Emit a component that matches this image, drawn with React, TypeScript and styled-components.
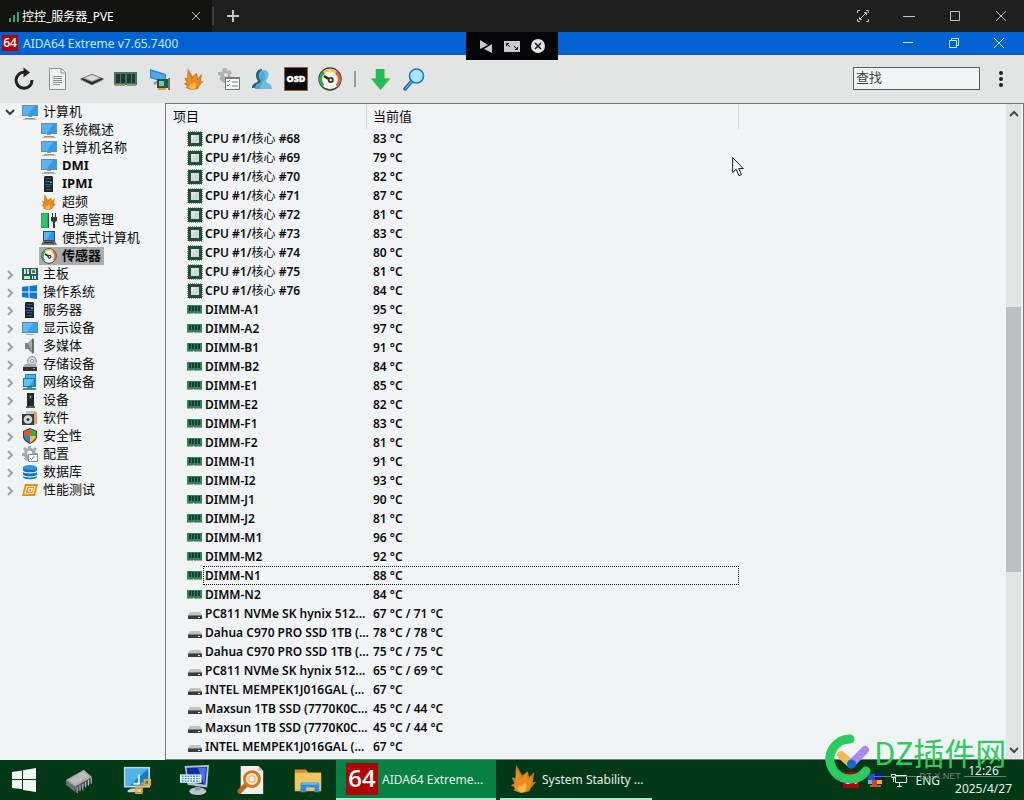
import React, { useState } from "react";
import styled, { createGlobalStyle } from "styled-components";

const UI = `"Noto Sans", "Noto Sans CJK SC", sans-serif`;

const Global = createGlobalStyle`
  * { box-sizing: border-box; }
  body { margin: 0; background: #f1f4f4; font-family: ${UI}; font-size: 13px; color: #0c0c0c; }
  button { border: 0; padding: 0; background: none; color: inherit; font: inherit; }
  svg { display: block; flex: none; }
`;

const Screen = styled.div`
  position: relative;
  display: flex;
  flex-direction: column;
  height: 100vh;
  overflow: hidden;
`;

/* Remote session tabs */
const TabBar = styled.header`
  display: flex;
  flex: none;
  height: 32px;
  background: #1f1f1f;
  color: #c4c4c4;
`;
const SessionTab = styled.div`
  display: flex;
  align-items: center;
  gap: 3px;
  width: 212px;
  padding: 0 8px;
  background: #121310;
  color: #fff;
  font-size: 12px;
`;
const TabTitle = styled.span`
  flex: 1;
  white-space: nowrap;
`;
const TabDivider = styled.span`
  width: 2px;
  height: 18px;
  margin-top: 7px;
  background: #3b3b3b;
`;
const IconButton = styled.button<{ $w?: number }>`
  display: flex;
  align-items: center;
  justify-content: center;
  width: ${(p) => p.$w ?? 16}px;
  height: 100%;
`;
const Controls = styled.div<{ $pad?: number }>`
  display: flex;
  margin-left: auto;
  padding-right: ${(p) => p.$pad ?? 0}px;
`;

/* Application window */
const TitleBar = styled.header`
  display: flex;
  flex: none;
  align-items: center;
  height: 23px;
  padding-left: 2px;
  gap: 5px;
  background: #0262d2;
  border-bottom: 1px solid #075fb4;
  color: #c4ecff;
`;
const AppTitle = styled.h1`
  margin: 0;
  font-size: 12px;
  font-weight: 400;
`;
const RemotePanel = styled.div`
  position: absolute;
  top: 32px;
  left: 50%;
  display: flex;
  align-items: center;
  justify-content: center;
  width: 92px;
  height: 28px;
  transform: translateX(-50%);
  background: #040406;
`;
const ToolBar = styled.div`
  display: flex;
  flex: none;
  align-items: center;
  height: 48px;
  padding: 0 7px;
  background: #e2e5e4;
`;
const Divider = styled.span`
  width: 2px;
  height: 16px;
  margin: 0 7px;
  background: #979a99;
`;
const SearchInput = styled.input`
  width: 127px;
  height: 23px;
  margin: 0 4px 2px auto;
  padding: 0 2px 3px;
  border: 1px solid #5c5e5e;
  background: #f1f4f4;
  font-family: ${UI};
  font-size: 13px;
  &::placeholder { color: #3f4242; opacity: 1; }
`;

const Body = styled.main`
  display: flex;
  flex: 1;
  min-height: 0;
`;
const Tree = styled.nav`
  flex: none;
  width: 165px;
  overflow: hidden;
`;
const TreeList = styled.ul`
  margin: 0;
  padding: 0;
  list-style: none;
`;
const TreeRow = styled.button<{ $child?: boolean; $bold?: boolean }>`
  display: flex;
  align-items: center;
  width: 100%;
  height: 18px;
  padding-left: ${(p) => (p.$child ? 39 : 3)}px;
  font-weight: ${(p) => (p.$bold ? 700 : 400)};
  text-align: left;
  white-space: nowrap;
`;
const Expander = styled.span`
  width: 17px;
`;
const TreeLabel = styled.span<{ $selected?: boolean }>`
  display: flex;
  align-items: center;
  gap: 5px;
  height: 18px;
  padding: 0 3px 0 2px;
  background: ${(p) => (p.$selected ? "#a9adac" : "transparent")};
`;
const TreeText = styled.span`
  height: 18px;
  line-height: 16px;
`;

const ListPane = styled.section`
  display: flex;
  flex: 1;
  min-width: 0;
  border: 1px solid #757877;
`;
const ListArea = styled.div`
  flex: 1;
  min-width: 0;
  overflow: hidden;
`;
const Table = styled.table`
  width: 573px;
  border-collapse: separate;
  border-spacing: 0;
  table-layout: fixed;
`;
const Head = styled.th<{ $w: number; $pad: number }>`
  width: ${(p) => p.$w}px;
  height: 25px;
  padding: 0 0 2px ${(p) => p.$pad}px;
  border-right: 1px solid #d5d8d8;
  font-weight: 400;
  text-align: left;
`;
const Row = styled.tr`
  height: 19px;
  font-size: 12px;
  font-weight: 600;
`;
const NameCell = styled.td`
  padding: 0 0 0 21px;
`;
const NameLine = styled.div`
  display: flex;
  align-items: center;
  height: 19px;
`;
const NameText = styled.span<{ $focus?: boolean }>`
  flex: 1;
  height: 19px;
  min-width: 0;
  padding-left: 1px;
  border: 1px dotted ${(p) => (p.$focus ? "#111" : "transparent")};
  border-right: 0;
  line-height: 17px;
  white-space: nowrap;
`;
const Han = styled.span`
  font-weight: 400;
  line-height: 1;
`;
const ValueCell = styled.td`
  padding: 0;
`;
const ValueText = styled.div<{ $focus?: boolean }>`
  height: 19px;
  padding-left: 6px;
  border: 1px dotted ${(p) => (p.$focus ? "#111" : "transparent")};
  border-left: 0;
  line-height: 17px;
  white-space: nowrap;
`;
const ScrollBar = styled.div`
  display: flex;
  flex-direction: column;
  width: 15px;
  margin-right: 2px;
  background: #e3e5e5;
`;
const ScrollButton = styled.button`
  display: flex;
  flex: none;
  align-items: center;
  justify-content: center;
  height: 19px;
`;
const ScrollTrack = styled.div`
  display: flex;
  flex: 1;
  flex-direction: column;
`;
const ScrollSpace = styled.span<{ $grow: number }>`
  flex: ${(p) => p.$grow};
`;
const ScrollThumb = styled.span`
  flex: 265;
  background: #bcc0c0;
`;

/* Taskbar */
const TaskBar = styled.footer`
  display: flex;
  flex: none;
  height: 40px;
  background: #033817;
  color: #e3f2e9;
`;
const Launchers = styled.div`
  display: flex;
  padding: 0 0 0 3px;
`;
const TaskButton = styled.button<{ $active?: boolean; $w: number }>`
  display: flex;
  align-items: center;
  gap: 4px;
  width: ${(p) => p.$w}px;
  margin: 0 4px 0 0;
  padding: 0 10px;
  background: ${(p) => (p.$active ? "#078043" : "transparent")};
  border-bottom: 2px solid #9ff0cb;
  font-size: 12px;
  white-space: nowrap;
`;
const Tray = styled.div`
  display: flex;
  align-items: center;
  gap: 8px;
  margin-left: auto;
  padding-right: 12px;
  font-size: 12px;
`;
const Clock = styled.time`
  display: flex;
  flex-direction: column;
  align-items: center;
  margin-left: 7px;
  line-height: 18px;
`;

/* Site mark that floats over the corner */
const Mark = styled.div`
  position: absolute;
  right: 18px;
  bottom: 16px;
  display: flex;
  align-items: flex-start;
  pointer-events: none;
`;
const MarkText = styled.div`
  display: flex;
  flex-direction: column;
  width: 132px;
`;
const MarkName = styled.span`
  color: #2ecb60;
  font-family: "Noto Sans CJK SC", sans-serif;
  font-size: 31px;
  font-weight: 400;
  line-height: 36px;
  white-space: nowrap;
`;
const MarkSite = styled.span`
  display: flex;
  align-items: center;
  gap: 3px;
  color: #76847c;
  font-family: "Liberation Sans", sans-serif;
  font-size: 9px;
  line-height: 12px;
  &::before, &::after { content: ""; flex: 1; height: 1px; background: #65846f; }
`;
const Pointer = styled.div`
  position: absolute;
  top: 156px;
  left: 732px;
  pointer-events: none;
`;

/* Icons */
const art: Record<string, React.ReactNode> = {
  monitor: (
    <>
      <rect x="0" y="1" width="16" height="11" fill="#6e8a9c" />
      <rect x="1" y="2" width="14" height="9" fill="#2f9cf0" />
      <path d="M1 11V2h11L6 11z" fill="#55b4f7" />
      <path d="M6 12h4v1H6zM3 14h10v1H3z" fill="#8b9499" />
      <path d="M1 15h14v1H1z" fill="#b3b9bc" />
    </>
  ),
  display: (
    <>
      <rect x="0" y="2" width="16" height="11" fill="#5f8298" />
      <rect x="1" y="3" width="14" height="9" fill="#37a5f2" />
      <path d="M1 3h10L5 12H1z" fill="#5ebcf8" />
      <path d="M4 14h8v1H4z" fill="#a2a9ac" />
    </>
  ),
  server: (
    <>
      <path d="M3 1l1-1h7l1 1v15H3z" fill="#20252b" />
      <path d="M5 2h5v1H5zM5 10h5v1H5zM5 13h5v1H5z" fill="#4b535b" />
      <path d="M4 5h7v1H4zM4 8h7v1H4z" fill="#1763d0" />
      <path d="M9 6h2v1H9z" fill="#35d96d" />
    </>
  ),
  flame: (
    <>
      <path d="M3.500 0L7 6l3-2.500L11 7l2.800-3-.8 6L15 9.500 12 13l-1 2-4.500 1L2 14.500 3 13 .5 11.500 2.500 10.500 1 7l2 .5z" fill="#c9821f" />
      <path d="M4 2.500L6.500 8 9.500 5l.7 4L13 6.500l-1.500 6-2.500 3H5L2.500 13l.5-3z" fill="#ef8a20" />
      <path d="M5 11.500l2 .5L8.500 10l1 2-.5 2.500-2.500 1.300L4.500 14z" fill="#ffb948" />
    </>
  ),
  power: (
    <>
      <rect x="0" y="1" width="7" height="15" fill="#20a957" />
      <path d="M1 2h5v13H1z" fill="#35c16e" />
      <path d="M7 1h1v15H7z" fill="#3d5146" />
      <path d="M11 1h1v4h2V1h1v4h1v4l-2 1v6h-2v-6l-2-1V5h1z" fill="#333735" />
    </>
  ),
  laptop: (
    <>
      <path d="M2 1h12v10H2z" fill="#3b454c" />
      <path d="M3 2h10v8H3z" fill="#2997ec" />
      <path d="M3 2h7l-4 8H3z" fill="#56b6f7" />
      <path d="M2 11h12l2 4H0z" fill="#677178" />
      <path d="M3 12h10v1H3z" fill="#222a30" />
    </>
  ),
  gauge: (
    <>
      <circle cx="8" cy="8" r="7.300" fill="#f4f4e9" stroke="#3c3f3d" strokeWidth="1" />
      <path d="M3.500 12.500A6 6 0 0 1 4 3.500" fill="none" stroke="#35a558" strokeWidth="2" />
      <path d="M4 3.500a6 6 0 0 1 8 0" fill="none" stroke="#f0c556" strokeWidth="2" />
      <path d="M12 3.500a6 6 0 0 1 .5 9" fill="none" stroke="#e0662f" strokeWidth="2" />
      <path d="M4 6l4 2.500" stroke="#222" strokeWidth="1.600" />
      <circle cx="8.500" cy="8.700" r="2" fill="#333" />
      <circle cx="8.500" cy="8.700" r=".8" fill="#eee" />
    </>
  ),
  board: (
    <>
      <rect x="0" y="2" width="16" height="12" fill="#20624b" />
      <path d="M2 3h2v5H2zM5 3h2v5H5zM9 3h5v5H9zM2 10h6v3H2zM10 10h1v3h-1zM12 10h2v3h-2z" fill="#cfe2d9" />
      <path d="M10 4h3v3h-3z" fill="#43826c" />
    </>
  ),
  windows: (
    <path d="M0 3l6.500-1v5.500H0zM7.500 1.900L15 1v6.500H7.500zM0 8.500h6.500V14L0 13zM7.500 8.500H15V15l-7.500-1z" fill="#087bd3" />
  ),
  speaker: (
    <>
      <path d="M3 5h3l5-5v16l-5-5H3z" fill="#7c8180" />
      <path d="M6 5l5-5v16z" fill="#a7abaa" />
      <path d="M10 1h2v14h-2z" fill="#676b6a" />
    </>
  ),
  storage: (
    <>
      <circle cx="10" cy="5" r="4.500" fill="#d5d8d8" stroke="#8c9090" />
      <circle cx="10" cy="5" r="1.600" fill="#f6f6f6" stroke="#8c9090" />
      <path d="M3 8h10l2 3H1z" fill="#a6aaaa" />
      <path d="M1 11h14v4H1z" fill="#303434" />
      <path d="M11 12h2v1h-2z" fill="#42dd72" />
    </>
  ),
  network: (
    <>
      <path d="M3 0h11v13H3z" fill="#247eb8" />
      <path d="M4 1h9v6H4z" fill="#48b2f4" />
      <path d="M1 4h12v9H1z" fill="#1e74ae" />
      <path d="M2 5h10v7H2z" fill="#62c1f8" />
      <path d="M12 5L7 12h5z" fill="#349ee8" />
      <path d="M5 13h5v1H5zM1 14h13v2H1z" fill="#3a9c68" />
    </>
  ),
  tower: (
    <>
      <path d="M5 1h7v14H5z" fill="#20272a" />
      <path d="M7 3h3v4H7z" fill="#3d474a" />
      <path d="M8 4h1v2H8z" fill="#40d47a" />
      <path d="M4 14h9v2H4z" fill="#555b5c" />
    </>
  ),
  software: (
    <>
      <path d="M4 1h9v14H4z" fill="#bfc5c6" />
      <path d="M12 1l3 1v12h-3z" fill="#e3a05c" />
      <path d="M0 4h12v11H0z" fill="#363c3e" />
      <circle cx="6" cy="9.500" r="4.300" fill="#d9dddd" />
      <circle cx="6" cy="9.500" r="1.500" fill="#333" />
    </>
  ),
  shield: (
    <>
      <path d="M8 0l7 3v5c0 4-3 6-7 8-4-2-7-4-7-8V3z" fill="#40392f" />
      <path d="M8 1v7H2V3.500z" fill="#e5562d" />
      <path d="M8 1l6 2.500V8H8z" fill="#45a645" />
      <path d="M2 8h6v7C5 13 2 11 2 8z" fill="#2c84ce" />
      <path d="M8 8h6c0 3-3 5-6 7z" fill="#f2bd32" />
    </>
  ),
  config: (
    <>
      <path d="M6 0h3v2l2 1 2-2 2 2-2 2 1 2h2v3H0V7h2l1-2-2-2 2-2 2 2 1-1zM1 10h5v4l-2 1-2-2 1-2z" fill="#a5abac" />
      <circle cx="7.500" cy="7" r="2.500" fill="#eef1f1" />
      <path d="M6.500 8.500h9v7h-9z" fill="#f8fafa" stroke="#818789" />
      <path d="M8 12l1.500 1.500L12 10.500" fill="none" stroke="#3e7b9d" />
    </>
  ),
  database: (
    <>
      <path d="M1 3v10c0 3 14 3 14 0V3z" fill="#1273c4" />
      <ellipse cx="8" cy="3.500" rx="7" ry="2.500" fill="#3297e4" />
      <path d="M1 7c1 2.500 13 2.500 14 0M1 11c1 2.500 13 2.500 14 0" fill="none" stroke="#e8f4fb" strokeWidth="1.200" />
    </>
  ),
  bench: (
    <>
      <path d="M3 2h13l-3 12H0z" fill="#ec8a18" />
      <path d="M5 4.500h8l-2 7H3zM7.200 6.500h3l-.7 3h-3z" fill="none" stroke="#fff0cf" strokeWidth="1.200" />
    </>
  ),
  cpu: (
    <>
      <rect x="1" y="1" width="14" height="14" fill="none" stroke="#8a9a91" strokeWidth="2" strokeDasharray="1 1" />
      <rect x="1" y="1" width="14" height="14" fill="#204f3b" />
      <rect x="4" y="4" width="8" height="8" fill="#cfd8d2" />
      <path d="M4 4h6l-6 6z" fill="#dee5e0" />
    </>
  ),
  ram: (
    <>
      <path d="M0 3h15v8H0z" fill="#2b8460" />
      <path d="M0 11h6v1H0zM7 11h8v1H7z" fill="#a0a583" />
      <path d="M2 4h2v5H2zM5 4h2v5H5zM8 4h2v5H8zM11 4h2v5h-2z" fill="#1e3930" />
    </>
  ),
  drive: (
    <>
      <path d="M3 6h10l2 3H1z" fill="#c1c4c4" />
      <path d="M1 9h14v4H1z" fill="#3a3d3d" />
      <path d="M1 9h14v1H1z" fill="#777b7b" />
      <path d="M11 11h2v1h-2z" fill="#d7f2dd" />
    </>
  ),
  aida: (
    <>
      <rect width="16" height="16" fill="#b00508" />
      <text x="8" y="12" textAnchor="middle" fontFamily="Open Sans, sans-serif" fontSize="12" fontWeight="600" fill="#fff">64</text>
    </>
  ),
  blocks: (
    <>
      <path d="M1 2h7v6H1z" fill="#1d55c8" />
      <path d="M8 1h7v7H8z" fill="#10149c" />
      <path d="M1 8h5v4H1z" fill="#58b8e8" />
      <path d="M5 8h5v5H5z" fill="#e63a28" />
      <path d="M10 8h5v4h-5z" fill="#f0b52c" />
      <path d="M3 13h11v2H3z" fill="#d05a20" />
    </>
  ),
  lan: (
    <>
      <path d="M4.500 3.500h11v7h-11zM8.500 11v3M6 14.500h5" fill="none" stroke="#e3f2e9" />
      <path d="M.5 2.500h4v3h-4zM2.500 6v4" fill="#033817" stroke="#e3f2e9" />
    </>
  ),
  refresh: (
    <>
      <path d="M13 5.300A8 8 0 1 0 20 13" fill="none" stroke="#222" strokeWidth="3" />
      <path d="M11.500 0.500l6.500 5-6.500 5z" fill="#222" />
    </>
  ),
  page: (
    <>
      <path d="M3.500 1.500h12l4 4v17h-16z" fill="#f0f2f2" stroke="#8b8f8f" />
      <path d="M15 2v4h4" fill="none" stroke="#8b8f8f" />
      <path d="M7 9.500h9M7 11.500h9M7 13.500h9M7 15.500h9M7 17.500h7" stroke="#8d9191" />
    </>
  ),
  chip: (
    <>
      <path d="M0 12l12-5 12 5-12 6z" fill="#25322e" />
      <path d="M2 11l10-4 10 4-10 4z" fill="#88958f" />
      <path d="M5 11l7-3 7 3-7 3z" fill="#dbe0dd" />
      <path d="M1 13l11 5 11-5" fill="none" stroke="#728078" strokeWidth="1" strokeDasharray="1 1" />
    </>
  ),
  memory: (
    <>
      <path d="M0 5h23v13H0z" fill="#3a7962" />
      <path d="M2 7h4v9H2zM7 7h4v9H7zM13 7h4v9h-4zM18 7h3v9h-3z" fill="#27342f" />
      <path d="M1 17h10v2H1zM13 17h9v2h-9z" fill="#8b9a73" />
    </>
  ),
  gpu: (
    <>
      <path d="M2 2l16 5v9L2 11z" fill="#3384b8" />
      <path d="M3 4l14 4v7L3 10z" fill="#49aaf2" />
      <path d="M5 16l5-3v3l-3 2z" fill="#8d9b9e" />
      <path d="M9 12h11v9H9z" fill="#195d43" />
      <path d="M11 14h5v5h-5z" fill="#8ac0a4" />
      <path d="M10 21h8v2h-8z" fill="#e89b2e" />
      <path d="M20 11h2v12h-2z" fill="#6e7678" />
    </>
  ),
  prefs: (
    <>
      <path d="M7 1h4v3l3-1 2 3-2 2 2 2-3 3-3-1v4H8l-5-4 2-3-3-1V5h4z" fill="#adb2b2" />
      <circle cx="10" cy="8" r="2" fill="#e2e5e4" />
      <path d="M9.500 10.500h14v12h-14z" fill="#f7f9f9" stroke="#6f7777" />
      <path d="M9 10h15v2H9z" fill="#778184" />
      <path d="M11 14l1 1 2-2M11 18l1 1 2-2" fill="none" stroke="#328ac0" />
      <path d="M16 15h6M16 19h6" stroke="#71797b" />
    </>
  ),
  user: (
    <>
      <path d="M2 21c0-5 5-5 6-7C4 9 6 2 12 2v19z" fill="#286774" />
      <path d="M5 22c0-6 5-5 6-8-4-5-2-11 3-11s6 6 2 11c1 3 6 2 6 8z" fill="#6fb9e4" />
      <path d="M12 4c4 2 4 8 1 10l-3 8H5c0-6 5-5 6-8-3-4-1-8 1-10z" fill="#3b95d2" opacity=".5" />
    </>
  ),
  osd: (
    <>
      <rect x="0" y="0" width="24" height="24" fill="#8f6046" />
      <rect x="1" y="1" width="22" height="22" fill="#0d0c0c" />
      <text x="12" y="15" textAnchor="middle" fontFamily="Open Sans, sans-serif" fontSize="9" fontWeight="800" fill="#fff" stroke="#fff" strokeWidth=".4">OSD</text>
    </>
  ),
  down: (
    <>
      <path d="M8 1h9v10h6L12.500 23 2 11h6z" fill="#d2d957" />
      <path d="M7 1h9v10h6L12 23 2 11h5z" fill="#24bd58" />
    </>
  ),
  find: (
    <>
      <path d="M10 14l-7 8" stroke="#1a5e9d" strokeWidth="3.500" strokeLinecap="round" />
      <path d="M10 14l-7 8" stroke="#57b9ed" strokeWidth="1.200" strokeLinecap="round" />
      <circle cx="14.500" cy="9" r="7" fill="#a8e6ff" stroke="#1d75bd" strokeWidth="1.600" />
    </>
  ),
};

interface IconProps {
  name: string;
  size?: number;
  box?: number;
}
const Icon = ({ name, size = 16, box = 16 }: IconProps) => (
  <svg width={size} height={size} viewBox={`0 0 ${box} ${box}`} aria-hidden="true">{art[name]}</svg>
);

interface LineProps {
  d: string;
  size?: number;
  color?: string;
  width?: number;
}
const Line = ({ d, size = 12, color = "currentColor", width = 1 }: LineProps) => (
  <svg width={size} height={size} viewBox={`0 0 ${size} ${size}`} fill="none" stroke={color} strokeWidth={width} aria-hidden="true">
    <path d={d} />
  </svg>
);

const tools: [string, string, number][] = [
  ["刷新", "refresh", 24], ["报告", "page", 24], ["处理器", "chip", 24], ["内存", "memory", 24],
  ["显卡", "gpu", 24], ["稳定性测试", "flame", 16], ["设置", "prefs", 24], ["用户", "user", 24],
  ["OSD", "osd", 24], ["传感器", "gauge", 16],
];

const children: [string, string, boolean?][] = [
  ["系统概述", "monitor"], ["计算机名称", "monitor"], ["DMI", "monitor", true], ["IPMI", "server", true],
  ["超频", "flame"], ["电源管理", "power"], ["便携式计算机", "laptop"], ["传感器", "gauge"],
];

const groups: [string, string][] = [
  ["主板", "board"], ["操作系统", "windows"], ["服务器", "server"], ["显示设备", "display"],
  ["多媒体", "speaker"], ["存储设备", "storage"], ["网络设备", "network"], ["设备", "tower"],
  ["软件", "software"], ["安全性", "shield"], ["配置", "config"], ["数据库", "database"], ["性能测试", "bench"],
];

type Reading = [icon: string, name: React.ReactNode, value: string, focus?: boolean];
const cores = [83, 79, 82, 87, 81, 83, 80, 81, 84];
const dimms: [string, number][] = [
  ["A1", 95], ["A2", 97], ["B1", 91], ["B2", 84], ["E1", 85], ["E2", 82], ["F1", 83], ["F2", 81],
  ["I1", 91], ["I2", 93], ["J1", 90], ["J2", 81], ["M1", 96], ["M2", 92], ["N1", 88], ["N2", 84],
];
const rows: Reading[] = [
  ...cores.map((t, i): Reading => ["cpu", <>CPU #1/<Han>核心</Han> #{68 + i}</>, `${t} °C`]),
  ...dimms.map(([n, t]): Reading => ["ram", `DIMM-${n}`, `${t} °C`, n === "N1"]),
  ["drive", "PC811 NVMe SK hynix 512...", "67 °C / 71 °C"],
  ["drive", "Dahua C970 PRO SSD 1TB (...", "78 °C / 78 °C"],
  ["drive", "Dahua C970 PRO SSD 1TB (...", "75 °C / 75 °C"],
  ["drive", "PC811 NVMe SK hynix 512...", "65 °C / 69 °C"],
  ["drive", "INTEL MEMPEK1J016GAL (...", "67 °C"],
  ["drive", "Maxsun 1TB SSD (7770K0C...", "45 °C / 44 °C"],
  ["drive", "Maxsun 1TB SSD (7770K0C...", "45 °C / 44 °C"],
  ["drive", "INTEL MEMPEK1J016GAL (...", "67 °C"],
];

const launchers: [string, React.ReactNode][] = [
  ["CPU", (
    <>
      <path d="M1 16L20 5l9 8-18 13z" fill="#a9aaa8" />
      <path d="M1 16l10 7v6L1 21z" fill="#6d6f6d" />
      <path d="M11 23l18-10v5L11 29z" fill="#4a4c4a" />
      <path d="M13 23v7M16 21v7M19 20v7M22 18v6M25 16v6M28 14v6" stroke="#c9cbc9" />
      <path d="M4 16L20 7l5 5-14 9z" fill="#bcbdbb" />
    </>
  )],
  ["远程桌面", (
    <>
      <path d="M2 2h28v22H2z" fill="#b9d6df" />
      <path d="M4 4h24v18H4z" fill="#147bc8" />
      <path d="M4 4h24L8 22H4z" fill="#50b3e8" />
      <path d="M18 10v10h-6" fill="none" stroke="#e4f5fb" strokeWidth="2" />
      <path d="M10 25h12v4H6v-2z" fill="#c0d5dc" />
      <path d="M15 24h6v6h-6zM24 16h6v5h-6zM20 20h4" fill="none" stroke="#f0a324" strokeWidth="2" />
    </>
  )],
  ["屏幕键盘", (
    <>
      <path d="M6 1l26-1-2 24-21-3z" fill="#b5c2d3" />
      <path d="M8 3l22-1-2 19-18-3z" fill="#122a9d" />
      <path d="M20 3h9l-2 18z" fill="#4776db" />
      <ellipse cx="20" cy="28" rx="9" ry="4" fill="#bcc3cb" />
      <path d="M17 23h6v4h-6z" fill="#8d98a5" />
      <path d="M1 10h23v9H1z" fill="#e9f5fb" />
      <path d="M3 12h19M3 14.500h19M3 17h19" stroke="#3c98bd" strokeWidth="1.500" strokeDasharray="2 1" />
    </>
  )],
  ["搜索", (
    <>
      <path d="M5 1h19l5 5v25H5z" fill="#eceeed" />
      <path d="M24 1v5h5z" fill="#b9bdbb" />
      <path d="M11 21l-7 7" stroke="#c56616" strokeWidth="5" strokeLinecap="round" />
      <circle cx="17" cy="15" r="8" fill="#f8e4cb" stroke="#d97719" strokeWidth="3" />
      <circle cx="17" cy="15" r="3.500" fill="#fbf1e4" stroke="#e79c51" />
    </>
  )],
  ["文件资源管理器", (
    <>
      <path d="M2 5h12l2 3h14v20H2z" fill="#ecb64b" />
      <path d="M2 5h12l1 3H2z" fill="#e18a24" />
      <path d="M2 9h28v17H2z" fill="#f3c760" />
      <path d="M8 29V20l2-2h16l2 2v9h-5v-5h-9v5z" fill="#2f8edb" />
      <path d="M10 18h16l1 3H9z" fill="#65b7ed" />
    </>
  )],
];

export default function App() {
  const [selected, setSelected] = useState("传感器");
  const [query, setQuery] = useState("");

  return (
    <Screen>
      <Global />
      <TabBar>
        <SessionTab>
          <svg width="11" height="11" viewBox="0 0 11 11"><path d="M1 7h2v4H1zM5 4h2v7H5zM9 1h2v10H9z" fill="#30ad62" /></svg>
          <TabTitle>控控_服务器_PVE</TabTitle>
          <IconButton aria-label="关闭标签"><Line color="#c4c4c4" d="M2 2l8 8M10 2l-8 8" /></IconButton>
        </SessionTab>
        <TabDivider />
        <IconButton $w={38} aria-label="新标签"><Line size={14} width={2} d="M7 1v12M1 7h12" /></IconButton>
        <Controls>
          <IconButton $w={46} aria-label="全屏"><Line size={14} d="M1.500 4V1.500H4M10 1.500h2.500V4M12.500 10v2.500H10M4 12.500H1.500V10M3.500 10.500l7-7M8 3.500h2.500V6M3.500 8v2.500H6" /></IconButton>
          <IconButton $w={46} aria-label="最小化"><Line d="M0 6.500h12" /></IconButton>
          <IconButton $w={46} aria-label="最大化"><Line d="M1.500 1.500h9v9h-9z" /></IconButton>
          <IconButton $w={46} aria-label="关闭"><Line d="M1 1l10 10M11 1L1 11" /></IconButton>
        </Controls>
      </TabBar>

      <TitleBar>
        <Icon name="aida" />
        <AppTitle>AIDA64 Extreme v7.65.7400</AppTitle>
        <Controls $pad={2}>
          <IconButton $w={46} aria-label="最小化窗口"><Line d="M1 5.500h10" /></IconButton>
          <IconButton $w={45} aria-label="还原窗口"><Line d="M1.500 3.500h7v7h-7zM3.500 3V1.500h7v7H9" /></IconButton>
          <IconButton $w={46} aria-label="关闭窗口"><Line d="M1 1l10 10M11 1L1 11" /></IconButton>
        </Controls>
      </TitleBar>

      <ToolBar role="toolbar">
        {tools.map(([label, name, box]) => (
          <IconButton key={label} $w={34} aria-label={label}><Icon name={name} box={box} size={name === "flame" ? 22 : 24} /></IconButton>
        ))}
        <Divider />
        <IconButton $w={34} aria-label="下载"><Icon name="down" box={24} size={23} /></IconButton>
        <IconButton $w={34} aria-label="放大镜"><Icon name="find" box={24} size={24} /></IconButton>
        <SearchInput aria-label="查找" placeholder="查找" value={query} onChange={(e) => setQuery(e.target.value)} />
        <IconButton $w={33} aria-label="更多">
          <svg width="4" height="16" viewBox="0 0 4 16" fill="#222"><circle cx="2" cy="2" r="2" /><circle cx="2" cy="8" r="2" /><circle cx="2" cy="14" r="2" /></svg>
        </IconButton>
      </ToolBar>

      <Body>
        <Tree aria-label="导航">
          <TreeList>
            <li>
              <TreeRow>
                <Expander><Line d="M3 4l4 4 4-4" color="#3a3c3c" width={2} /></Expander>
                <TreeLabel><Icon name="monitor" /><TreeText>计算机</TreeText></TreeLabel>
              </TreeRow>
              <TreeList>
                {children.map(([label, icon, bold]) => (
                  <li key={label}>
                    <TreeRow $child $bold={bold || selected === label} onClick={() => setSelected(label)}>
                      <TreeLabel $selected={selected === label}><Icon name={icon} /><TreeText>{label}</TreeText></TreeLabel>
                    </TreeRow>
                  </li>
                ))}
              </TreeList>
            </li>
            {groups.map(([label, icon]) => (
              <li key={label}>
                <TreeRow>
                  <Expander><Line d="M5 3l4 4-4 4" color="#a0a3a3" width={2} /></Expander>
                  <TreeLabel><Icon name={icon} /><TreeText>{label}</TreeText></TreeLabel>
                </TreeRow>
              </li>
            ))}
          </TreeList>
        </Tree>

        <ListPane>
          <ListArea>
            <Table>
              <thead>
                <tr><Head $w={201} $pad={7}>项目</Head><Head $w={372} $pad={6}>当前值</Head></tr>
              </thead>
              <tbody>
                {rows.map(([icon, name, value, focus], i) => (
                  <Row key={i}>
                    <NameCell><NameLine><Icon name={icon} /><NameText $focus={focus}>{name}</NameText></NameLine></NameCell>
                    <ValueCell><ValueText $focus={focus}>{value}</ValueText></ValueCell>
                  </Row>
                ))}
              </tbody>
            </Table>
          </ListArea>
          <ScrollBar>
            <ScrollButton aria-label="向上"><Line d="M2 8l4-4 4 4" color="#484b4b" width={2} /></ScrollButton>
            <ScrollTrack>
              <ScrollSpace $grow={184} />
              <ScrollThumb />
              <ScrollSpace $grow={168} />
            </ScrollTrack>
            <ScrollButton aria-label="向下"><Line d="M2 4l4 4 4-4" color="#484b4b" width={2} /></ScrollButton>
          </ScrollBar>
        </ListPane>
      </Body>

      <TaskBar>
        <IconButton $w={48} aria-label="开始">
          <svg width="24" height="24" viewBox="0 0 24 24" fill="#f0f7f2"><path d="M0 4l10-1.500V11H0zM11 2.300L24 0v11H11zM0 12h10v9L0 20zM11 12h13v12l-13-2z" /></svg>
        </IconButton>
        <Launchers>
          {launchers.map(([label, drawing]) => (
            <IconButton key={label} $w={57} aria-label={label}><svg width="30" height="30" viewBox="0 0 32 32">{drawing}</svg></IconButton>
          ))}
        </Launchers>
        <TaskButton $w={160} $active><Icon name="aida" size={32} />AIDA64 Extreme...</TaskButton>
        <TaskButton $w={152}><Icon name="flame" size={28} />System Stability ...</TaskButton>
        <Tray>
          <Icon name="aida" />
          <Icon name="blocks" />
          <Icon name="lan" />
          <span>ENG</span>
          <Clock><span>12:26</span><span>2025/4/27</span></Clock>
        </Tray>
      </TaskBar>

      <RemotePanel>
        <IconButton $w={26} aria-label="切换"><svg width="12" height="13" viewBox="0 0 12 13" fill="#c9cbcb"><path d="M0 0l8 5-8 4zM12 4v9L4 9z" /></svg></IconButton>
        <IconButton $w={26} aria-label="缩放">
          <svg width="16" height="11" viewBox="0 0 16 11"><rect width="16" height="11" fill="#c9cbcb" /><path d="M2.500 5V2.500H5M3 3l3 3M13.500 6v2.500H11M13 8l-3-3" fill="none" stroke="#151515" /></svg>
        </IconButton>
        <IconButton $w={26} aria-label="断开">
          <svg width="14" height="14" viewBox="0 0 14 14"><circle cx="7" cy="7" r="7" fill="#e4e6e6" /><path d="M4 4l6 6M10 4l-6 6" stroke="#111" strokeWidth="1.500" /></svg>
        </IconButton>
      </RemotePanel>

      <Pointer>
        <svg width="13" height="22" viewBox="0 0 13 22"><path d="M.7 1.500v15l3.500-3.300 2.800 6.500 2.400-1.100-2.700-6h4.600z" fill="#fff" stroke="#111" /></svg>
      </Pointer>

      <Mark>
        <svg width="50" height="50" viewBox="0 0 50 50" fill="none" strokeWidth="8" strokeLinecap="round">
          <path d="M26 5A20 20 0 1 0 42 37" stroke="#2bcb5f" strokeWidth="9" />
          <path d="M17 21l10 9" stroke="#f3b94a" />
          <path d="M41 16L28 29" stroke="#a987f4" />
          <circle cx="27.500" cy="30" r="4.500" fill="#0e6cd8" />
        </svg>
        <MarkText>
          <MarkName>DZ插件网</MarkName>
          <MarkSite>DZ-X.NET</MarkSite>
        </MarkText>
      </Mark>
    </Screen>
  );
}
